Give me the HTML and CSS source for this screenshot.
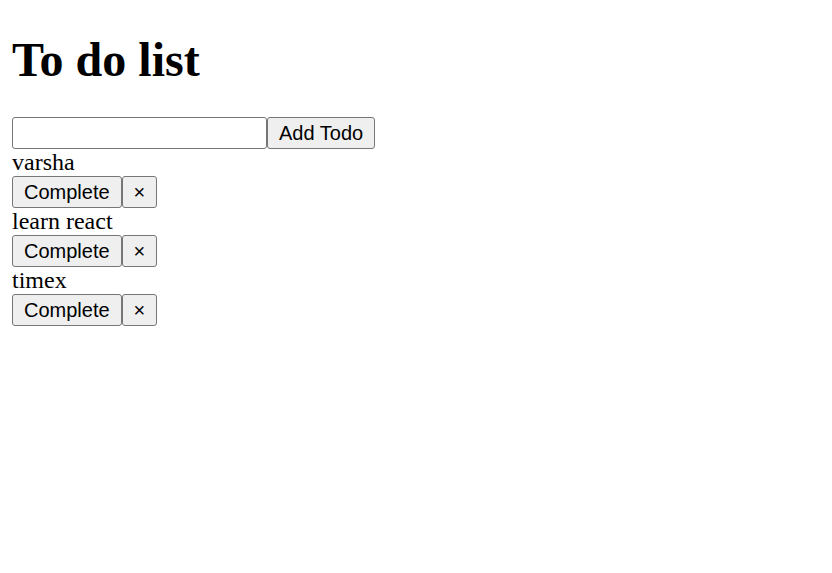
FILE: index.html
```html
<!DOCTYPE html>
<html>
<head>
<meta charset="utf-8">
<link rel="stylesheet" href="styles.css">
</head>
<body>
<div class="app">
  <h1 class="title">To do list</h1>
  <form class="add-form">
    <input class="todo-input" type="text"><button class="btn" type="button">Add Todo</button>
  </form>
  <div class="todo">
    <div class="todo-text">varsha</div>
    <div class="todo-actions"><button class="btn">Complete</button><button class="btn">×</button></div>
  </div>
  <div class="todo">
    <div class="todo-text">learn react</div>
    <div class="todo-actions"><button class="btn">Complete</button><button class="btn">×</button></div>
  </div>
  <div class="todo">
    <div class="todo-text">timex</div>
    <div class="todo-actions"><button class="btn">Complete</button><button class="btn">×</button></div>
  </div>
</div>
</body>
</html>
```
FILE: styles.css
```css
body {
  margin: 12px;
  font-family: "Liberation Serif", serif;
  font-size: 24px;
  color: #000;
  background: #fff;
}
.title {
  font-size: 48px;
  font-weight: bold;
  margin: 20px 0 30px;
  line-height: 55px;
}
.add-form {
  display: flex;
  margin: 0;
}
.todo-input {
  box-sizing: border-box;
  width: 255px;
  height: 32px;
  margin: 0;
  border: 1px solid #767676;
  border-radius: 3px;
  padding: 1px 3px;
  font-family: "Liberation Sans", sans-serif;
  font-size: 20px;
  background: #fff;
}
.btn {
  box-sizing: border-box;
  height: 32px;
  margin: 0;
  padding: 0 11px;
  border: 1px solid #767676;
  border-radius: 3px;
  background: #efefef;
  color: #000;
  font-family: "Liberation Sans", sans-serif;
  font-size: 20px;
}
.todo-text {
  line-height: 27px;
}
.todo-actions {
  display: flex;
}
```
